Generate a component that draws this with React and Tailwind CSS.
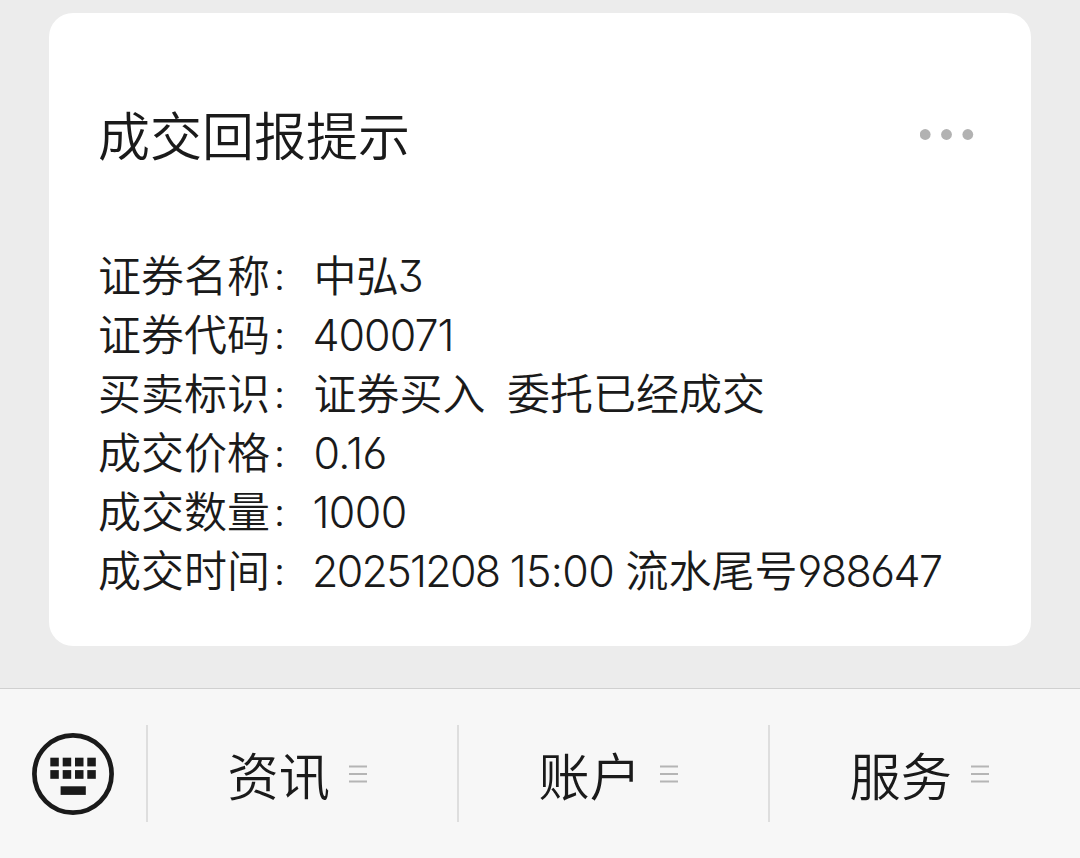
const CJK = "font-['Noto_Sans_CJK_SC',sans-serif]";
const DIGITS = "font-['Inter','Noto_Sans_CJK_SC',sans-serif] [font-feature-settings:'cv03','cv04','cv09'] font-[330]";

function Num({ children, className = "" }) {
  return <span className={`${DIGITS} ${className}`}>{children}</span>;
}

const rows = [
  { label: "证券名称", value: <><span className="tracking-[-0.5px]">中弘</span><Num className="-ml-px">3</Num></> },
  { label: "证券代码", value: <Num className="-ml-[1px] tracking-[-1px]">400071</Num> },
  { label: "买卖标识", value: <>证券买入<span className="inline-block w-[21.5px] whitespace-pre">{"  "}</span>委托已经成交</> },
  { label: "成交价格", value: <Num className="tracking-[-0.6px]">0.16</Num> },
  { label: "成交数量", value: <Num className="-ml-[1px] tracking-[-0.6px]">1000</Num> },
  {
    label: "成交时间",
    value: (
      <>
        <Num className="-ml-[1.5px] tracking-[-1.7px]">20251208 </Num>
        <Num className="tracking-[-0.7px]">15:00 </Num>
        流水尾号
        <Num className="tracking-[-1.5px]">988647</Num>
      </>
    ),
  },
];

function KeyboardIcon() {
  return (
    <svg className="size-[84px] shrink-0" viewBox="0 0 84 84" fill="#1a1a1a">
      <circle cx="42" cy="42" r="38.6" fill="none" stroke="#1a1a1a" strokeWidth="4.7" />
      {[25.7, 38.1].map((y) =>
        [19.3, 31.7, 44, 56.3].map((x) => <rect key={`${x}-${y}`} x={x} y={y} width="8.5" height="8.7" />)
      )}
      <rect x="29.6" y="54.3" width="25.2" height="8.6" />
    </svg>
  );
}

function MenuIcon() {
  return (
    <svg className="w-[18px] h-[20px] shrink-0" viewBox="0 0 18 20" stroke="#b5b5b5" strokeWidth="2">
      <path d="M0 2.4H18M0 10H18M0 17.6H18" />
    </svg>
  );
}

function Tab({ label }) {
  return (
    <div className="flex h-[97px] w-[311px] items-center border-l-2 border-[#dedede] pl-[79.5px]">
      <span className="w-[121.7px] text-[51.2px] leading-[60px] whitespace-nowrap">{label}</span>
      <MenuIcon />
    </div>
  );
}

export default function App() {
  return (
    <div className={`flex h-[858px] w-[1080px] flex-col overflow-hidden bg-[#ececec] font-[350] text-[#1a1a1a] ${CJK}`}>
      <main className="h-[688px] px-[49px] pt-[13px]">
        <section className="h-[633px] w-[982px] rounded-[24px] bg-white px-[49px] pt-[84px]">
          <header className="flex h-[76px] items-center justify-between pr-[8.5px]">
            <h1 className="mb-[2px] text-[52px] leading-[76px] font-[350]">成交回报提示</h1>
            <svg className="h-[12px] w-[54px] -translate-y-[0.5px]" viewBox="0 0 54 12" fill="#b2b2b2">
              <circle cx="5.2" cy="6" r="5.4" />
              <circle cx="26.5" cy="6" r="5.4" />
              <circle cx="47.8" cy="6" r="5.4" />
            </svg>
          </header>
          <dl className="mt-[70.5px] text-[43px]">
            {rows.map((row) => (
              <div key={row.label} className="flex h-[59.1px] leading-[59.1px] whitespace-nowrap">
                <dt className="flex w-[215.5px]">
                  {row.label}
                  <span className="pt-[3px] pl-[2px] text-[30px]">：</span>
                </dt>
                <dd className="whitespace-pre">{row.value}</dd>
              </div>
            ))}
          </dl>
        </section>
      </main>
      <nav className="flex h-[170px] items-center border-t border-[#d0d0d0] bg-[#f7f7f7]">
        <div className="flex w-[146px] pl-[31px]">
          <KeyboardIcon />
        </div>
        <Tab label="资讯" />
        <Tab label="账户" />
        <Tab label="服务" />
      </nav>
    </div>
  );
}
